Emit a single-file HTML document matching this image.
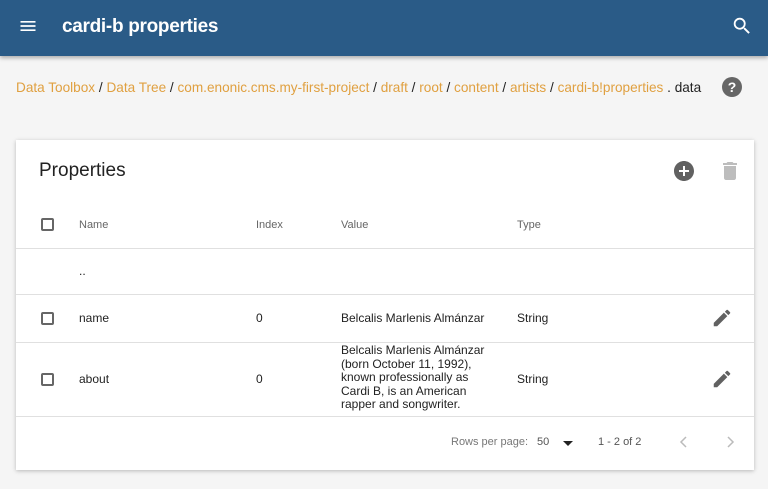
<!DOCTYPE html>
<html><head><meta charset="utf-8"><style>
*{margin:0;padding:0;box-sizing:border-box}
body{width:768px;height:489px;background:#f5f5f5;font-family:"Liberation Sans",sans-serif;position:relative;overflow:hidden}
.hdr{position:absolute;left:0;top:0;width:768px;height:56px;background:#2a5b87;box-shadow:0 2px 4px rgba(0,0,0,.3)}
.hdr .t{position:absolute;left:62px;top:16px;color:#fff;font-size:19px;font-weight:bold;letter-spacing:-0.3px}
.bc{position:absolute;left:16px;top:80px;font-size:13.6px;color:#222;white-space:nowrap}
.bc a{color:#e0a040}
.help{position:absolute;left:722px;top:77px;width:20px;height:20px;border-radius:50%;background:#666;color:#fff;font-size:14px;font-weight:bold;text-align:center;line-height:20px}
.card{position:absolute;left:16px;top:140px;width:738px;height:330px;background:#fff;box-shadow:0 1px 4px rgba(0,0,0,.25)}
.card .h{position:absolute;left:23px;top:20px;font-size:19px;color:#222}
.line{position:absolute;left:0;width:738px;height:1px;background:#e0e0e0}
.tx{position:absolute;font-size:12px;color:#222}
.th{color:#666;font-size:11px}
.cb{position:absolute;left:25px;width:13px;height:13px;border:2px solid #666;border-radius:2px}
</style></head><body>
<div class="hdr">
<svg style="position:absolute;left:18px;top:16px" width="20" height="20" viewBox="0 0 24 24"><path fill="#fff" d="M3 6h18v2H3zm0 5h18v2H3zm0 5h18v2H3z"/></svg>
<div class="t">cardi-b properties</div>
<svg style="position:absolute;left:731px;top:15px" width="22" height="22" viewBox="0 0 24 24"><path fill="#fff" d="M15.5 14h-.79l-.28-.27A6.47 6.47 0 0 0 16 9.5 6.5 6.5 0 1 0 9.5 16c1.61 0 3.09-.59 4.23-1.57l.27.28v.79l5 4.99L20.49 19l-4.99-5zm-6 0C7.01 14 5 11.99 5 9.5S7.01 5 9.5 5 14 7.01 14 9.5 11.99 14 9.5 14z"/></svg>
</div>
<div class="bc"><a>Data Toolbox</a> / <a>Data Tree</a> / <a>com.enonic.cms.my-first-project</a> / <a>draft</a> / <a>root</a> / <a>content</a> / <a>artists</a> / <a>cardi-b!properties</a> . data</div>
<div class="help">?</div>
<div class="card">
<div class="h">Properties</div>
<svg style="position:absolute;left:656px;top:19px" width="24" height="24" viewBox="0 0 24 24"><path fill="#616161" d="M12 2C6.48 2 2 6.48 2 12s4.48 10 10 10 10-4.48 10-10S17.52 2 12 2zm5 11h-4v4h-2v-4H7v-2h4V7h2v4h4v2z"/></svg>
<svg style="position:absolute;left:702px;top:19px" width="24" height="24" viewBox="0 0 24 24"><path fill="#bdbdbd" d="M6 19c0 1.1.9 2 2 2h8c1.1 0 2-.9 2-2V7H6v12zM19 4h-3.5l-1-1h-5l-1 1H5v2h14V4z"/></svg>
<div class="cb" style="top:78px"></div>
<div class="tx th" style="left:63px;top:79px">Name</div>
<div class="tx th" style="left:240px;top:79px">Index</div>
<div class="tx th" style="left:325px;top:79px">Value</div>
<div class="tx th" style="left:501px;top:79px">Type</div>
<div class="line" style="top:108px"></div>
<div class="tx" style="left:63px;top:124px">..</div>
<div class="line" style="top:154px"></div>
<div class="cb" style="top:172px"></div>
<div class="tx" style="left:63px;top:171px">name</div>
<div class="tx" style="left:240px;top:171px">0</div>
<div class="tx" style="left:325px;top:171px">Belcalis Marlenis Almánzar</div>
<div class="tx" style="left:501px;top:171px">String</div>
<svg style="position:absolute;left:695px;top:167px" width="22" height="22" viewBox="0 0 24 24"><path fill="#616161" d="M3 17.25V21h3.75L17.81 9.94l-3.75-3.75L3 17.25zM20.71 7.04a1 1 0 0 0 0-1.41l-2.34-2.34a1 1 0 0 0-1.41 0l-1.83 1.83 3.75 3.75 1.83-1.83z"/></svg>
<div class="line" style="top:202px"></div>
<div class="cb" style="top:233px"></div>
<div class="tx" style="left:63px;top:232px">about</div>
<div class="tx" style="left:240px;top:232px">0</div>
<div class="tx" style="left:325px;top:204px;width:155px;line-height:13.5px">Belcalis Marlenis Almánzar (born October 11, 1992), known professionally as Cardi B, is an American rapper and songwriter.</div>
<div class="tx" style="left:501px;top:232px">String</div>
<svg style="position:absolute;left:695px;top:228px" width="22" height="22" viewBox="0 0 24 24"><path fill="#616161" d="M3 17.25V21h3.75L17.81 9.94l-3.75-3.75L3 17.25zM20.71 7.04a1 1 0 0 0 0-1.41l-2.34-2.34a1 1 0 0 0-1.41 0l-1.83 1.83 3.75 3.75 1.83-1.83z"/></svg>
<div class="line" style="top:276px"></div>
<div class="tx" style="left:435px;top:296px;color:#777;font-size:11px">Rows per page:</div>
<div class="tx" style="left:521px;top:296px;color:#555;font-size:11px">50</div>
<div style="position:absolute;left:547px;top:301px;border:5px solid transparent;border-top-color:#222;border-bottom:0"></div>
<div class="tx" style="left:582px;top:296px;color:#555;font-size:11px">1 - 2 of 2</div>
<svg style="position:absolute;left:660px;top:294px" width="16" height="16" viewBox="0 0 16 16"><path d="M10 3L5 8l5 5" fill="none" stroke="#bbb" stroke-width="1.5"/></svg>
<svg style="position:absolute;left:706px;top:294px" width="16" height="16" viewBox="0 0 16 16"><path d="M6 3l5 5-5 5" fill="none" stroke="#bbb" stroke-width="1.5"/></svg>
</div>
</body></html>
